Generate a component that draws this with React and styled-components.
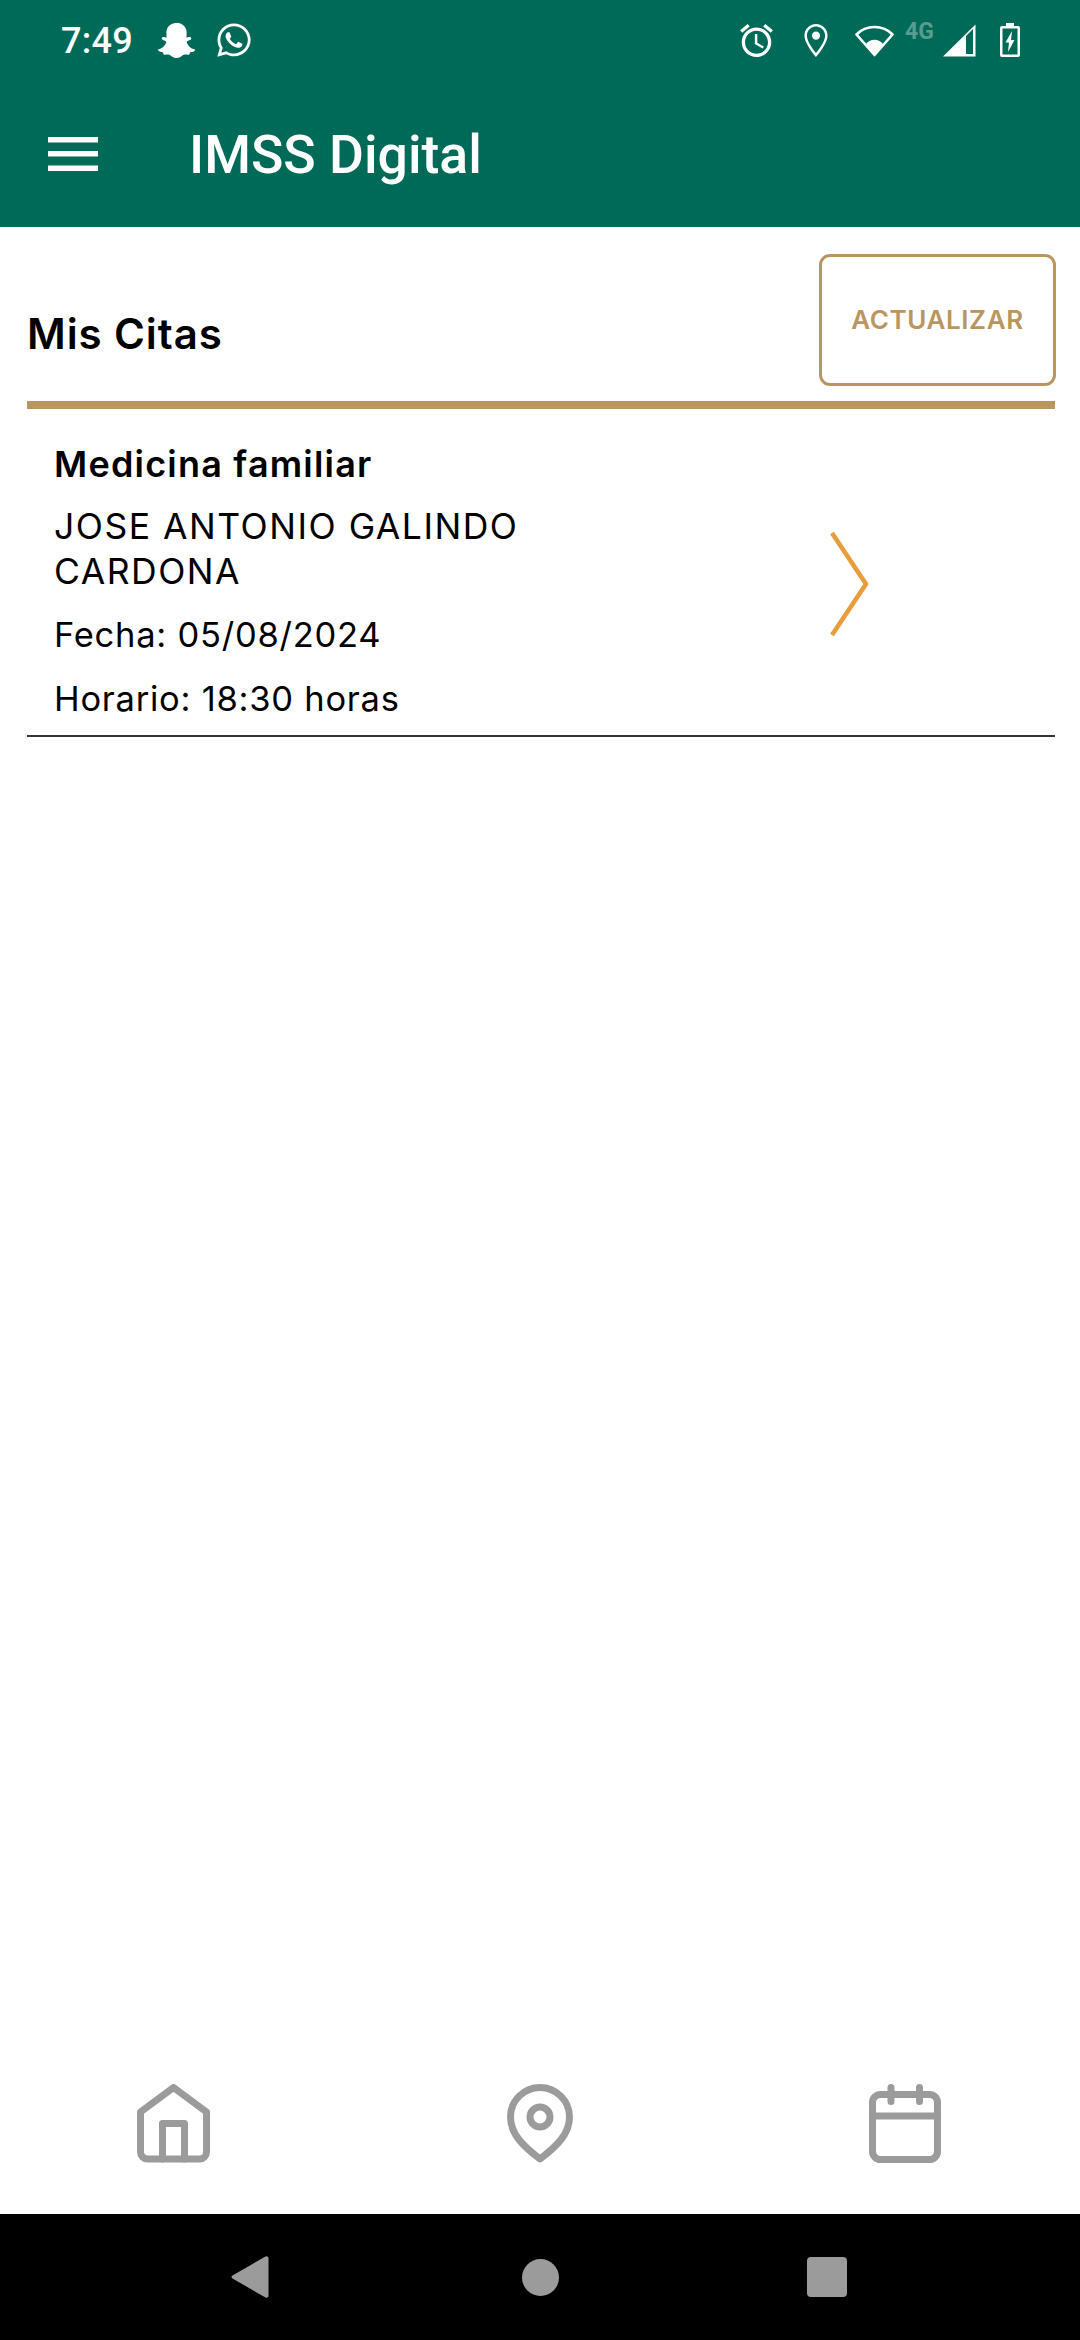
import React from "react";
import styled, { createGlobalStyle } from "styled-components";
import { FaSnapchatGhost, FaWhatsapp } from "react-icons/fa";

const Global = createGlobalStyle`
  html, body { margin: 0; padding: 0; background: #fff; }
`;
const Page = styled.div`
  width: 1080px; height: 2340px; display: flex; flex-direction: column;
  font-family: "Inter", "Open Sans", sans-serif; color: #000; background: #fff; overflow: hidden;
`;
const Header = styled.header`background: #006a59; color: #fff; height: 227px; flex: none;`;
const StatusBar = styled.div`
  height: 80px; display: flex; align-items: center; justify-content: space-between;
  padding: 0 60px 0 61px; box-sizing: border-box;
`;
const StatusGroup = styled.div`display: flex; align-items: center;`;
const Clock = styled.span`
  font: 500 36px/40px Roboto, sans-serif; width: 97px; letter-spacing: 0.3px; padding-top: 2px;
`;
const Toolbar = styled.div`
  height: 147px; box-sizing: border-box; padding: 0 0 0 48px; display: flex; align-items: center;
`;
const Title = styled.h1`
  margin: 3px 0 0 91px; font: 500 53.5px/60px Roboto, sans-serif;
`;
const Spaced = styled.span`display: flex; margin-left: ${p => p.$ml || 0}px;`;
const FourG = styled.span`
  font: 700 23px/24px Roboto, sans-serif; color: rgba(255,255,255,.35); margin: -16px 6px 0 11px; width: 32px;
`;
const Main = styled.main`
  flex: 1; padding: 0 25px 0 27px; display: flex; flex-direction: column;
`;
const TitleRow = styled.div`
  height: 182px; box-sizing: border-box; padding-top: 27px; display: flex; justify-content: space-between;
  align-items: flex-start; border-bottom: 8px solid #ba955f;
`;
const PageTitle = styled.h2`
  margin: 53px 0 0; font: 600 42px/54px "Inter", sans-serif; letter-spacing: 0.9px;
`;
const UpdateButton = styled.button`
  width: 237px; height: 132px; box-sizing: border-box; border: 3px solid #ba955f; border-radius: 11px;
  background: #fff; color: #ba955f; font: 600 26px/30px "Inter", sans-serif; padding: 0; letter-spacing: 0.6px;
  margin-right: -1px;
`;
const Card = styled.article`
  height: 328px; box-sizing: border-box; border-bottom: 2px solid #333; padding: 32px 0 0 27px;
  display: flex; justify-content: space-between;
`;
const CardText = styled.div`width: 500px;`;
const Specialty = styled.div`font: 600 36px/46px "Inter", sans-serif; letter-spacing: 1.2px; margin-bottom: 17px;`;
const Doctor = styled.div`font: 400 35.5px/45px "Inter", sans-serif; letter-spacing: 1.5px; margin-bottom: 18px;`;
const Detail = styled.div`font: 400 34.5px/45px "Inter", sans-serif; letter-spacing: 0.75px; margin-bottom: 19px;`;
const Chevron = styled.svg`width: 40px; height: 108px; margin: 90px 186px 0 0; flex: none; filter: blur(0.6px);`;
const Spacer = styled.div`flex: 1;`;
const TabBar = styled.nav`
  height: 173px; flex: none; box-sizing: border-box; padding: 43px 138px 0 137px;
  display: flex; justify-content: space-between; align-items: flex-start;
`;
const NavBar = styled.div`
  height: 126px; flex: none; background: #000; display: flex; align-items: center; justify-content: space-between;
  padding: 0 233px 0 231px; box-sizing: border-box;
`;
const HomeDot = styled.span`width: 37px; height: 37px; border-radius: 50%; background: #9b9b9b; margin-left: 5px;`;
const StopKey = styled.span`width: 40px; height: 40px; border-radius: 4px; background: #9b9b9b;`;

const I = { fill: "none", stroke: "#9b9b9b", strokeWidth: 7, strokeLinejoin: "round", strokeLinecap: "round" };

export default function App() {
  return (
    <Page>
      <Global />
      <Header>
        <StatusBar>
          <StatusGroup>
            <Clock>7:49</Clock>
            <FaSnapchatGhost size={37} />
            <Spaced $ml={20}><FaWhatsapp size={38} /></Spaced>
          </StatusGroup>
          <StatusGroup>
            <svg width="33" height="33" viewBox="2 1.86 20 20.14" fill="#fff">
              <path d="M22 5.72l-4.6-3.86-1.29 1.53 4.6 3.86L22 5.72zM7.88 3.39L6.6 1.86 2 5.71l1.29 1.53 4.59-3.85zM12.5 8H11v6l4.75 2.85.75-1.23-4-2.37V8zM12 4c-4.97 0-9 4.03-9 9s4.03 9 9 9 9-4.03 9-9-4.03-9-9-9zm0 16c-3.87 0-7-3.13-7-7s3.13-7 7-7 7 3.13 7 7-3.13 7-7 7z" />
            </svg>
            <Spaced $ml={31}>
              <svg width="24" height="33" viewBox="5 2 14 20" fill="#fff">
                <path fillRule="evenodd" d="M12 2C8.13 2 5 5.13 5 9c0 5.25 7 13 7 13s7-7.75 7-13c0-3.87-3.13-7-7-7zM6.500 9c0-3 2.500-5.500 5.500-5.500s5.500 2.500 5.500 5.500c0 3.500-3.300 8-5.500 10.600C9.800 17 6.500 12.500 6.500 9z" />
                <circle cx="12" cy="9" r="2.500" />
              </svg>
            </Spaced>
            <Spaced $ml={27}>
              <svg width="39" height="33" viewBox="0 0 39 33">
                <path d="M1.500 10.500C11 .5 28 .5 37.500 10.500L19.500 31z" fill="none" stroke="#fff" strokeWidth="2.600" strokeLinejoin="round" />
                <path d="M10.500 20.500C15 14 24 14 28.500 20.500L19.500 32z" fill="#fff" />
              </svg>
            </Spaced>
            <FourG>4G</FourG>
            <svg width="33" height="33" viewBox="0 0 33 33">
              <path d="M0 32.500 32.500 .5V32.500z" fill="#fff" />
              <path d="M23 12V30H30V5z" fill="#006a59" />
            </svg>
            <Spaced $ml={24}>
              <svg width="20" height="34" viewBox="0 0 20 34">
                <path d="M6 0h8v3h4a2 2 0 0 1 2 2v27a2 2 0 0 1-2 2H2a2 2 0 0 1-2-2V5a2 2 0 0 1 2-2h4z" fill="#fff" />
                <rect x="2.500" y="5.500" width="15" height="26" fill="#006a59" />
                <path d="M12 8 5.500 19.500H9L8 29l6.500-12H11z" fill="#fff" />
              </svg>
            </Spaced>
          </StatusGroup>
        </StatusBar>
        <Toolbar>
          <svg width="50" height="34" viewBox="0 0 50 34" fill="#fff">
            <rect width="50" height="5.500" />
            <rect y="14" width="50" height="5.500" />
            <rect y="28.500" width="50" height="5.500" />
          </svg>
          <Title>IMSS Digital</Title>
        </Toolbar>
      </Header>
      <Main>
        <TitleRow>
          <PageTitle>Mis Citas</PageTitle>
          <UpdateButton>ACTUALIZAR</UpdateButton>
        </TitleRow>
        <Card>
          <CardText>
            <Specialty>Medicina familiar</Specialty>
            <Doctor>JOSE ANTONIO GALINDO CARDONA</Doctor>
            <Detail>Fecha: 05/08/2024</Detail>
            <Detail>Horario: 18:30 horas</Detail>
          </CardText>
          <Chevron viewBox="0 0 40 108">
            <path d="M3 2 37 53 3 104" fill="none" stroke="#e89c3c" strokeWidth="4.500" />
          </Chevron>
        </Card>
        <Spacer />
      </Main>
      <TabBar>
        <svg width="73" height="79" viewBox="0 0 73 79" {...I}>
          <path d="M36.500 3.500 3.500 28V68a7 7 0 0 0 7 7h52a7 7 0 0 0 7-7V28z" />
          <path d="M25.500 75V39.500h22V75" />
        </svg>
        <svg width="66" height="79" viewBox="0 0 66 79" {...I}>
          <path d="M33 75C16 62 3.500 50 3.500 33a29.500 29.500 0 0 1 59 0C62.500 50 50 62 33 75z" />
          <circle cx="33" cy="33" r="10" />
        </svg>
        <svg width="73" height="79" viewBox="0 0 73 79" {...I}>
          <rect x="3.500" y="10.500" width="65" height="65" rx="8" />
          <path d="M3.500 32h65M22 3.500v14M50.500 3.500v14" />
        </svg>
      </TabBar>
      <NavBar>
        <svg width="38" height="44" viewBox="0 0 38 44">
          <path d="M1.500 20.500 34.500 1.500a2 2 0 0 1 3 1.500v38a2 2 0 0 1-3 1.500L1.500 23.500a1.700 1.700 0 0 1 0-3z" fill="#9b9b9b" />
        </svg>
        <HomeDot />
        <StopKey />
      </NavBar>
    </Page>
  );
}
